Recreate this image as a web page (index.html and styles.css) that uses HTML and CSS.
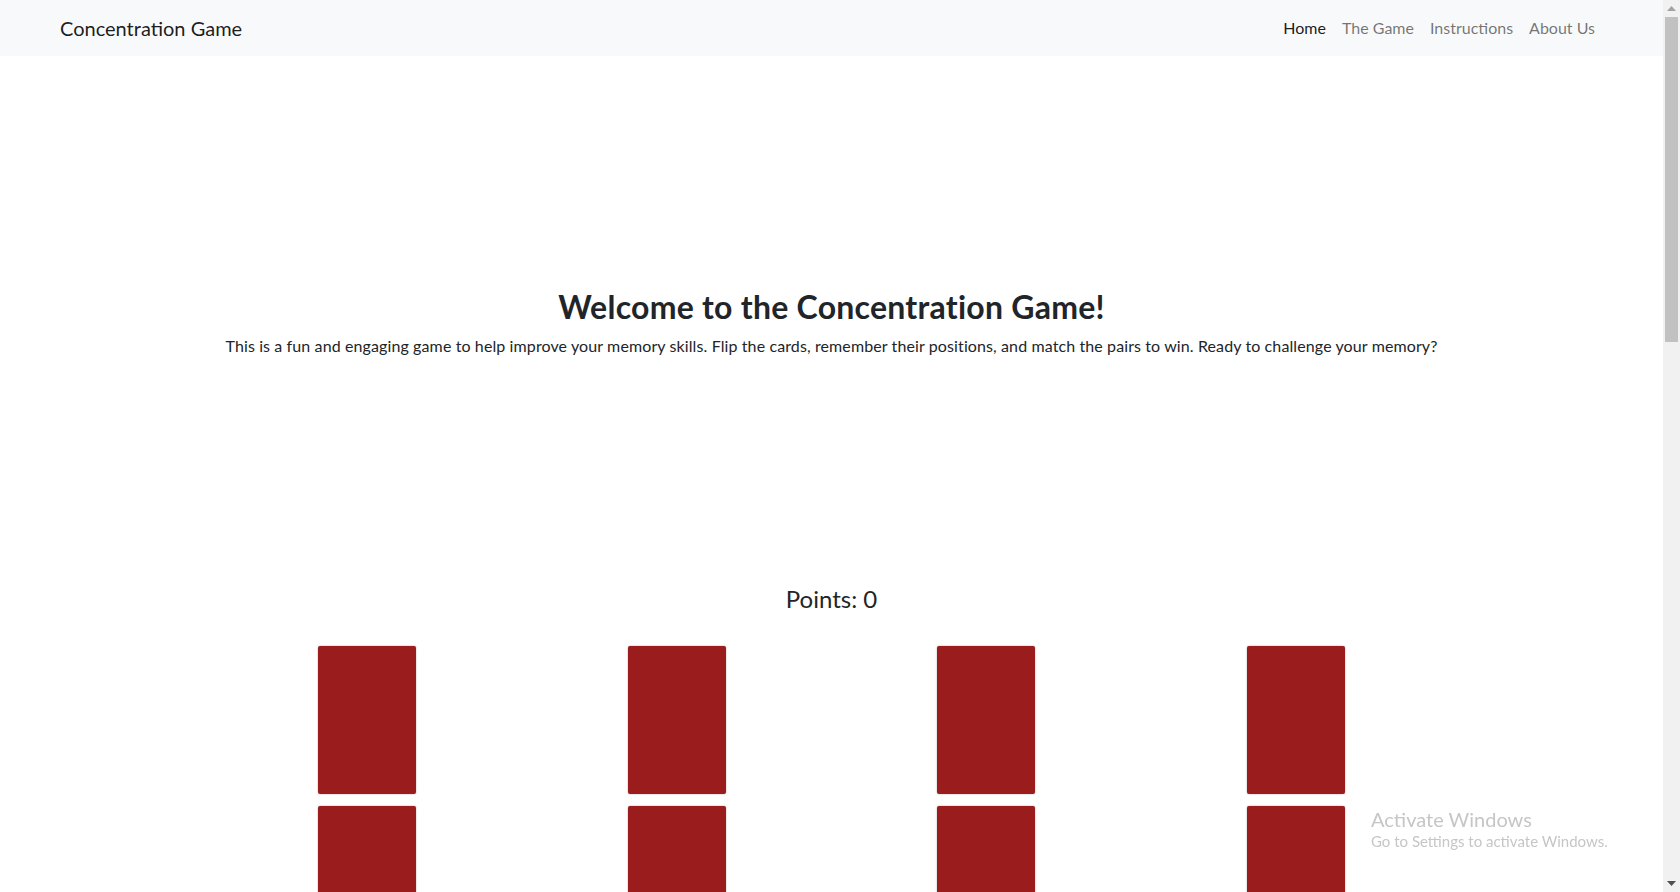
FILE: index.html
```html
<!DOCTYPE html>
<html lang="en">
<head>
<meta charset="utf-8">
<title>Concentration Game</title>
<link rel="stylesheet" href="styles.css">
</head>
<body>
<nav class="navbar">
  <div class="nav-inner">
    <a class="brand" href="#">Concentration Game</a>
    <ul class="nav-links">
      <li><a class="nav-link active" href="#">Home</a></li>
      <li><a class="nav-link" href="#">The Game</a></li>
      <li><a class="nav-link" href="#">Instructions</a></li>
      <li><a class="nav-link" href="#">About Us</a></li>
    </ul>
  </div>
</nav>

<section class="hero">
  <h1 class="hero-title">Welcome to the Concentration Game!</h1>
  <p class="hero-text">This is a fun and engaging game to help improve your memory skills. Flip the cards, remember their positions, and match the pairs to win. Ready to challenge your memory?</p>
</section>

<section class="game">
  <h2 class="points">Points: 0</h2>
  <div class="board">
    <div class="slot"><div class="card"></div></div>
    <div class="slot"><div class="card"></div></div>
    <div class="slot"><div class="card"></div></div>
    <div class="slot"><div class="card"></div></div>
    <div class="slot"><div class="card"></div></div>
    <div class="slot"><div class="card"></div></div>
    <div class="slot"><div class="card"></div></div>
    <div class="slot"><div class="card"></div></div>
    <div class="slot"><div class="card"></div></div>
    <div class="slot"><div class="card"></div></div>
    <div class="slot"><div class="card"></div></div>
    <div class="slot"><div class="card"></div></div>
    <div class="slot"><div class="card"></div></div>
    <div class="slot"><div class="card"></div></div>
    <div class="slot"><div class="card"></div></div>
    <div class="slot"><div class="card"></div></div>
  </div>
</section>

<div class="scrollbar">
  <div class="sb-btn">
    <svg width="9" height="5" viewBox="0 0 9 5"><polygon points="4.5,0 9,5 0,5" fill="#a3a3a3"/></svg>
  </div>
  <div class="sb-track"><div class="sb-thumb"></div></div>
  <div class="sb-btn">
    <svg width="9" height="5" viewBox="0 0 9 5"><polygon points="0,0 9,0 4.5,5" fill="#505050"/></svg>
  </div>
</div>

<div class="watermark">
  <div class="wm-title">Activate Windows</div>
  <div class="wm-text">Go to Settings to activate Windows.</div>
</div>
</body>
</html>
```

FILE: styles.css
```css
body {
  margin: 0 17px 0 0;
  font-family: Lato, "Noto Sans", "Liberation Sans", sans-serif;
  font-size: 16px;
  line-height: 1.5;
  color: #212529;
  background: #fff;
}

.navbar {
  background: #f8f9fa;
  padding: 8px 0;
}
.nav-inner {
  display: flex;
  align-items: center;
  justify-content: space-between;
  padding: 0 60px;
}
.brand {
  font-size: 20px;
  line-height: 30px;
  padding: 5px 0;
  color: rgba(0, 0, 0, 0.9);
  text-decoration: none;
}
.nav-links {
  display: flex;
  list-style: none;
  margin: 0;
  padding: 0;
}
.nav-link {
  display: block;
  padding: 8px;
  color: rgba(0, 0, 0, 0.55);
  text-decoration: none;
}
.nav-link.active {
  color: rgba(0, 0, 0, 0.9);
}

.hero {
  text-align: center;
  padding: 232px 0 211px;
}
.hero-title {
  margin: 0 0 8px;
  font-size: 32px;
  font-weight: 700;
  line-height: 1.2;
  letter-spacing: 0.25px;
}
.hero-text {
  margin: 0 0 16px;
  letter-spacing: 0.11px;
}

.game {
  text-align: center;
  padding-bottom: 1080px;
}
.points {
  margin: 0 0 32px;
  font-size: 24px;
  font-weight: 400;
  line-height: 1.2;
}
.board {
  width: 1238px;
  margin: 0 auto;
  display: grid;
  grid-template-columns: repeat(4, 1fr);
  row-gap: 12px;
}
.slot {
  display: flex;
  justify-content: center;
}
.card {
  width: 98px;
  height: 148px;
  background: #9b1c1c;
  border-radius: 2px;
  box-shadow: 0 0 2px rgba(0, 0, 0, 0.35);
}

.scrollbar {
  position: fixed;
  top: 0;
  right: 0;
  width: 17px;
  height: 100vh;
  background: #f1f1f1;
  display: flex;
  flex-direction: column;
}
.sb-btn {
  height: 17px;
  display: flex;
  align-items: center;
  justify-content: center;
  flex: none;
}
.sb-btn svg {
  display: block;
}
.sb-track {
  flex: 1;
  padding: 0 2px;
}
.sb-thumb {
  height: 325px;
  background: #c1c1c1;
}

.watermark {
  position: fixed;
  left: 1371px;
  top: 806px;
  color: #c6c6c6;
  pointer-events: none;
}
.wm-title {
  font-size: 20px;
  line-height: 26px;
}
.wm-text {
  font-size: 15px;
  line-height: 19px;
}
```
